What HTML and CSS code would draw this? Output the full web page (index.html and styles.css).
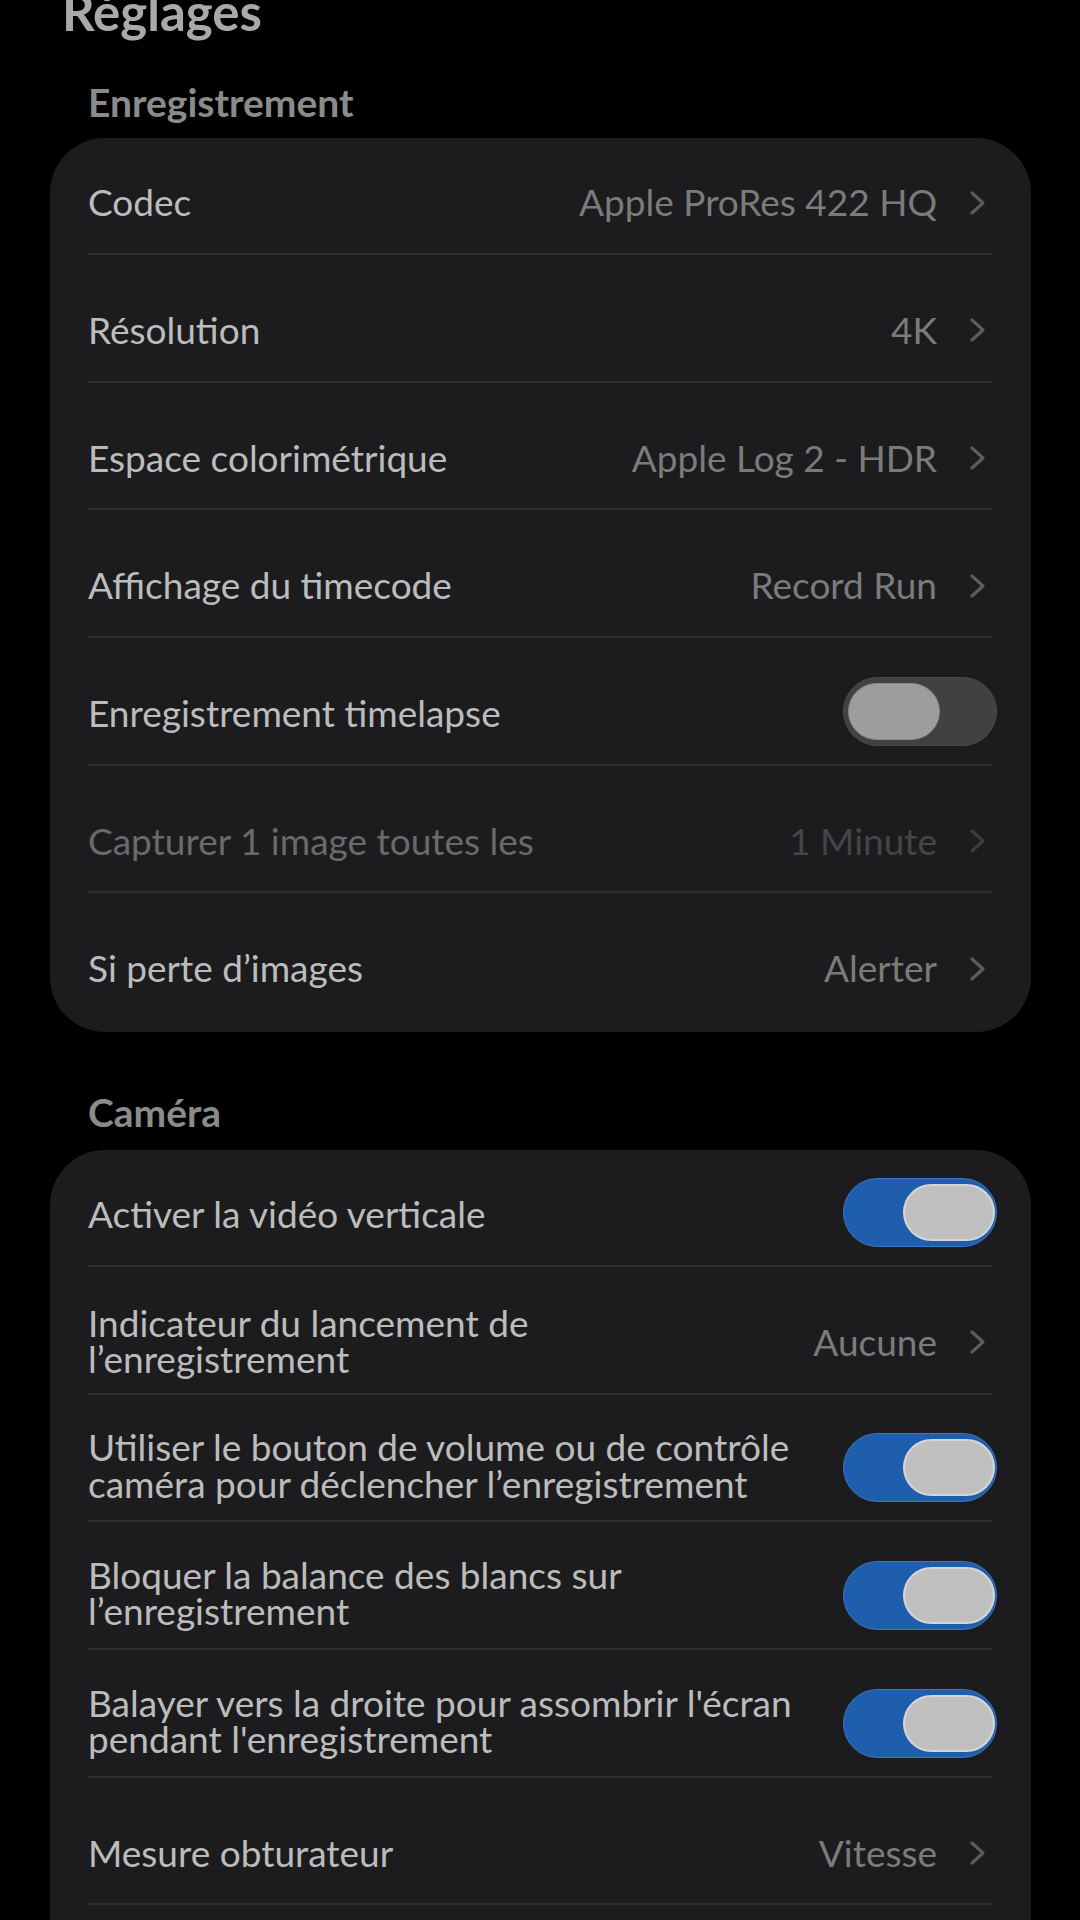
FILE: index.html
```html
<!DOCTYPE html>
<html lang="fr">
<head>
<meta charset="utf-8">
<title>Réglages</title>
<link rel="stylesheet" href="styles.css">
</head>
<body>
<main class="screen">
  <h1 class="page-title">Réglages</h1>

  <section class="group">
    <h2 class="group-title">Enregistrement</h2>
    <div class="card">
      <div class="row"><div class="row-main">
        <span class="label">Codec</span>
        <span class="value">Apple ProRes 422 HQ</span>
        <svg class="chev" viewBox="0 0 17 26"><polyline points="3,3 14,13 3,23"/></svg>
      </div></div>
      <div class="row"><div class="row-main">
        <span class="label">Résolution</span>
        <span class="value">4K</span>
        <svg class="chev" viewBox="0 0 17 26"><polyline points="3,3 14,13 3,23"/></svg>
      </div></div>
      <div class="row"><div class="row-main">
        <span class="label">Espace colorimétrique</span>
        <span class="value">Apple Log 2 - HDR</span>
        <svg class="chev" viewBox="0 0 17 26"><polyline points="3,3 14,13 3,23"/></svg>
      </div></div>
      <div class="row"><div class="row-main">
        <span class="label">Affichage du timecode</span>
        <span class="value">Record Run</span>
        <svg class="chev" viewBox="0 0 17 26"><polyline points="3,3 14,13 3,23"/></svg>
      </div></div>
      <div class="row"><div class="row-main">
        <span class="label">Enregistrement timelapse</span>
        <span class="toggle"><span class="knob"></span></span>
      </div></div>
      <div class="row disabled"><div class="row-main">
        <span class="label">Capturer 1 image toutes les</span>
        <span class="value">1 Minute</span>
        <svg class="chev" viewBox="0 0 17 26"><polyline points="3,3 14,13 3,23"/></svg>
      </div></div>
      <div class="row"><div class="row-main">
        <span class="label">Si perte d’images</span>
        <span class="value">Alerter</span>
        <svg class="chev" viewBox="0 0 17 26"><polyline points="3,3 14,13 3,23"/></svg>
      </div></div>
    </div>
  </section>

  <section class="group">
    <h2 class="group-title">Caméra</h2>
    <div class="card">
      <div class="row"><div class="row-main">
        <span class="label">Activer la vidéo verticale</span>
        <span class="toggle on"><span class="knob"></span></span>
      </div></div>
      <div class="row"><div class="row-main">
        <span class="label multi near">Indicateur du lancement de l’enregistrement</span>
        <span class="value">Aucune</span>
        <svg class="chev" viewBox="0 0 17 26"><polyline points="3,3 14,13 3,23"/></svg>
      </div></div>
      <div class="row"><div class="row-main">
        <span class="label multi">Utiliser le bouton de volume ou de contrôle caméra pour déclencher l’enregistrement</span>
        <span class="toggle on"><span class="knob"></span></span>
      </div></div>
      <div class="row"><div class="row-main">
        <span class="label multi">Bloquer la balance des blancs sur l’enregistrement</span>
        <span class="toggle on"><span class="knob"></span></span>
      </div></div>
      <div class="row"><div class="row-main">
        <span class="label multi">Balayer vers la droite pour assombrir l'écran pendant l'enregistrement</span>
        <span class="toggle on"><span class="knob"></span></span>
      </div></div>
      <div class="row"><div class="row-main">
        <span class="label">Mesure obturateur</span>
        <span class="value">Vitesse</span>
        <svg class="chev" viewBox="0 0 17 26"><polyline points="3,3 14,13 3,23"/></svg>
      </div></div>
      <div class="row"><div class="row-main">
        <span class="label">&nbsp;</span>
      </div></div>
    </div>
  </section>
</main>
</body>
</html>
```

FILE: styles.css
```css
html, body {
  margin: 0;
  padding: 0;
  background: #000;
  overflow: hidden;
}

body {
  font-family: Lato, "Open Sans", "Liberation Sans", sans-serif;
  -webkit-font-smoothing: antialiased;
}

.screen {
  padding: 0 49px 0 50px;
}

.page-title {
  margin: 0;
  padding-left: 12px;
  font-size: 51px;
  font-weight: 700;
  line-height: 24px;
  color: #a9a9a9;
}

.group-title {
  margin: 58px 0 16px;
  padding-left: 38px;
  font-size: 39px;
  font-weight: 700;
  line-height: 40px;
  color: #8b8b8b;
}

.group + .group .group-title {
  margin-top: 60px;
  margin-bottom: 18px;
}

.card {
  background: #1c1c1e;
  border-radius: 55px;
  padding: 0 39px 0 38px;
}

.row {
  height: 127.7px;
  box-sizing: border-box;
  padding-top: 14px;
}

.row-main {
  height: 101px;
  display: flex;
  align-items: center;
  gap: 24px;
  border-bottom: 2px solid #2d2d2f;
}

.card > .row:last-child .row-main {
  border-bottom-color: transparent;
}

.label {
  flex: 1;
  min-width: 0;
  font-size: 37px;
  line-height: 36.5px;
  color: #bcbcbc;
}

.label.multi {
  margin-bottom: 8px;
}

.label.multi.near {
  margin-bottom: 2px;
}

.value {
  flex: none;
  font-size: 37px;
  line-height: 36.5px;
  color: #7b7b7b;
  white-space: nowrap;
}

.chev {
  flex: none;
  width: 17px;
  height: 26px;
  margin-left: 8px;
  margin-right: 6px;
  fill: none;
  stroke: #5c5c5c;
  stroke-width: 3.2;
  stroke-linecap: round;
  stroke-linejoin: round;
}

.disabled .label { color: #6a6a6a; }
.disabled .value { color: #454547; }
.disabled .chev { stroke: #3c3c3e; }

.toggle {
  flex: none;
  box-sizing: border-box;
  width: 154px;
  height: 69px;
  margin-right: -5px;
  margin-bottom: 4px;
  padding: 5px 3px 5px 4px;
  border-radius: 35px;
  background: #414143;
  border: 1px solid #4c4c4e;
  display: flex;
  justify-content: flex-start;
}

.knob {
  box-sizing: border-box;
  width: 92px;
  height: 100%;
  border-radius: 30px;
  background: #9d9d9f;
  border: 1px solid #8a8a8c;
}

.toggle.on {
  background: #1f5eac;
  border-color: #3a78c8;
  justify-content: flex-end;
  padding-right: 1px;
}

.toggle.on .knob {
  background: #c0c0c0;
  border: 2px solid #d6d6d8;
}
```
